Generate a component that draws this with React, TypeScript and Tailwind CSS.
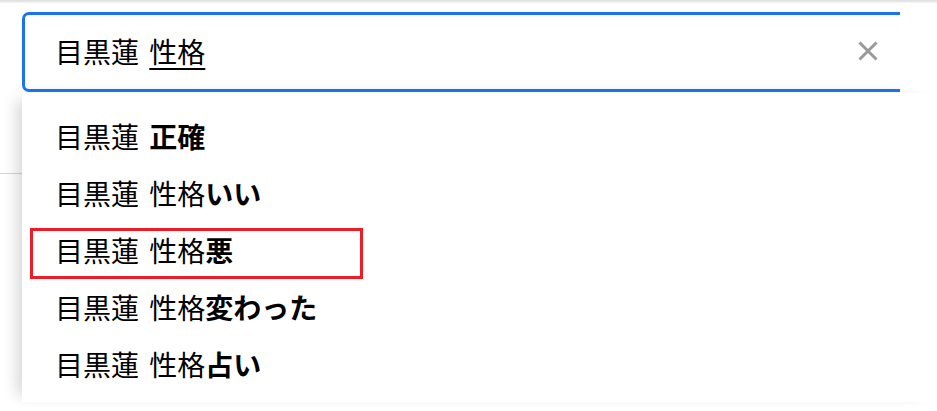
import React from "react";

const items: { base: string; bold: string }[] = [
  { base: "目黒蓮 ", bold: "正確" },
  { base: "目黒蓮 性格", bold: "いい" },
  { base: "目黒蓮 性格", bold: "悪" },
  { base: "目黒蓮 性格", bold: "変わった" },
  { base: "目黒蓮 性格", bold: "占い" },
];

export default function App() {
  return (
    <div className="relative w-[937px] h-[411px] overflow-hidden bg-white font-['Noto_Sans_CJK_JP','Noto_Sans',sans-serif] text-black">
      {/* page underneath */}
      <div className="h-[3px] bg-gradient-to-b from-[#dedede] to-[#f4f4f4]" />
      <div className="mt-[170px] h-px w-full bg-[#d4d4d4]" />

      {/* search widget overlay */}
      <div className="absolute left-[22px] top-[12px] w-[915px]">
        <div className="flex h-[80px] w-[878px] items-center rounded-l-[7px] border-y-[3px] border-l-[3px] border-r-0 border-[#1a73f0] bg-white pl-[30px] pr-[22px] shadow-[inset_0_-10px_10px_-10px_rgba(0,0,0,0.05)]">
          <span className="mb-[3px] flex-1 text-[28px] leading-none [word-spacing:4px]">
            目黒蓮{" "}
            <span className="underline decoration-2 underline-offset-[5px]">性格</span>
          </span>
          <svg width="20" height="20" viewBox="0 0 20 20" className="mb-[2px]">
            <path d="M1.5 1.5 L18.5 18.5 M18.5 1.5 L1.5 18.5" stroke="#999999" strokeWidth="3" strokeLinecap="butt" />
          </svg>
        </div>

        <div className="relative mt-px h-[309px] bg-white pl-[33px] pt-[14px] shadow-[-12px_0_14px_-7px_rgba(0,0,0,0.16)]">
          {items.map((it, i) => (
            <div key={i} className="flex h-[57px] items-center text-[28px] leading-none whitespace-pre [word-spacing:4px]">
              <span>{it.base}</span>
              <span className="font-bold">{it.bold}</span>
            </div>
          ))}
          <div className="absolute left-[8px] top-[135px] h-[51px] w-[333px] border-[3px] border-[#ee1c25]" />
        </div>
      </div>
    </div>
  );
}
